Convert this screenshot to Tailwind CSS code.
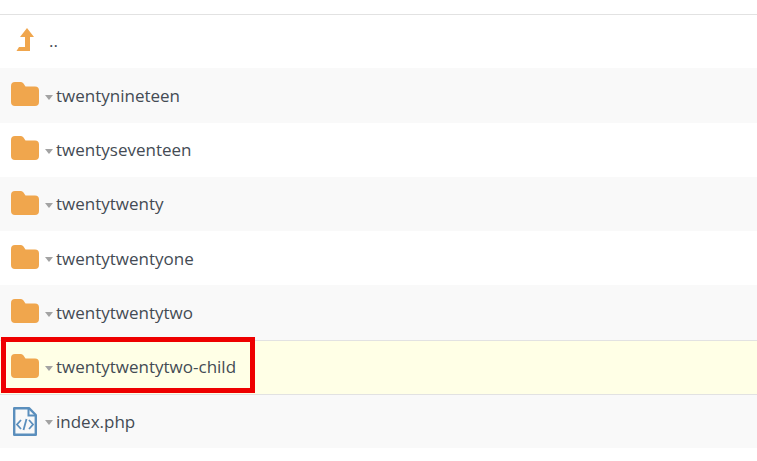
<!DOCTYPE html>
<html lang="en">
<head>
    <meta charset="UTF-8">
    <title>File manager</title>
    <script src="https://cdn.jsdelivr.net/npm/@tailwindcss/browser@4"></script>
</head>
<body class="bg-white font-['Open_Sans',sans-serif] text-[17px] text-[#444b54] overflow-hidden">
    <div class="relative h-[461px] pt-[14px]">
        <div class="border-t border-[#e2e2e2]">
            <!-- parent dir -->
            <div class="flex items-center h-[53.4px] bg-white">
                <svg class="ml-[16px] mr-[15px] mb-[4px] w-[18px] h-[23px]" viewBox="0 0 18 23"><path fill="#f0a64d" d="M11 0 18 9H14V23H.5L3 19H9V9H4z"/></svg>
                <span class="leading-none mb-[2px]">..</span>
            </div>

            <div class="flex items-center h-[54.25px] bg-[#f9f9f9]">
                <svg class="ml-[11px] mb-[3px] w-[28px] h-[24px]" viewBox="0 0 28 24"><path fill="#f0a64d" d="M4 0h6q1.500 0 2.500 1.500L14.500 4.500H24q4 0 4 4V20q0 4-4 4H4q-4 0-4-4V4q0-4 4-4z"/></svg>
                <span class="ml-[6px] mr-[3px] mt-[3px] border-x-[4.5px] border-x-transparent border-t-[5px] border-t-[#a3a3a3]"></span>
                <span>twentynineteen</span>
            </div>
            <div class="flex items-center h-[54.25px] bg-white">
                <svg class="ml-[11px] mb-[3px] w-[28px] h-[24px]" viewBox="0 0 28 24"><path fill="#f0a64d" d="M4 0h6q1.500 0 2.500 1.500L14.500 4.500H24q4 0 4 4V20q0 4-4 4H4q-4 0-4-4V4q0-4 4-4z"/></svg>
                <span class="ml-[6px] mr-[3px] mt-[3px] border-x-[4.5px] border-x-transparent border-t-[5px] border-t-[#a3a3a3]"></span>
                <span>twentyseventeen</span>
            </div>
            <div class="flex items-center h-[54.25px] bg-[#f9f9f9]">
                <svg class="ml-[11px] mb-[3px] w-[28px] h-[24px]" viewBox="0 0 28 24"><path fill="#f0a64d" d="M4 0h6q1.500 0 2.500 1.500L14.500 4.500H24q4 0 4 4V20q0 4-4 4H4q-4 0-4-4V4q0-4 4-4z"/></svg>
                <span class="ml-[6px] mr-[3px] mt-[3px] border-x-[4.5px] border-x-transparent border-t-[5px] border-t-[#a3a3a3]"></span>
                <span>twentytwenty</span>
            </div>
            <div class="flex items-center h-[54.25px] bg-white">
                <svg class="ml-[11px] mb-[3px] w-[28px] h-[24px]" viewBox="0 0 28 24"><path fill="#f0a64d" d="M4 0h6q1.500 0 2.500 1.500L14.500 4.500H24q4 0 4 4V20q0 4-4 4H4q-4 0-4-4V4q0-4 4-4z"/></svg>
                <span class="ml-[6px] mr-[3px] mt-[3px] border-x-[4.5px] border-x-transparent border-t-[5px] border-t-[#a3a3a3]"></span>
                <span>twentytwentyone</span>
            </div>
            <div class="flex items-center h-[54.25px] bg-[#f9f9f9]">
                <svg class="ml-[11px] mb-[3px] w-[28px] h-[24px]" viewBox="0 0 28 24"><path fill="#f0a64d" d="M4 0h6q1.500 0 2.500 1.500L14.500 4.500H24q4 0 4 4V20q0 4-4 4H4q-4 0-4-4V4q0-4 4-4z"/></svg>
                <span class="ml-[6px] mr-[3px] mt-[3px] border-x-[4.5px] border-x-transparent border-t-[5px] border-t-[#a3a3a3]"></span>
                <span>twentytwentytwo</span>
            </div>
            <!-- selected row -->
            <div class="flex items-center h-[55px] bg-[#ffffe6] border-y border-[#e2e2e2]">
                <svg class="ml-[11px] mb-[3px] w-[28px] h-[24px]" viewBox="0 0 28 24"><path fill="#f0a64d" d="M4 0h6q1.500 0 2.500 1.500L14.500 4.500H24q4 0 4 4V20q0 4-4 4H4q-4 0-4-4V4q0-4 4-4z"/></svg>
                <span class="ml-[6px] mr-[3px] mt-[3px] border-x-[4.5px] border-x-transparent border-t-[5px] border-t-[#a3a3a3]"></span>
                <span>twentytwentytwo-child</span>
            </div>
            <div class="flex items-center h-[53.5px] bg-[#f9f9f9]">
                <svg class="ml-[13px] mr-[2px] w-[24px] h-[29px]" viewBox="0 0 24 29" fill="none" stroke="#5b8fbd"><path stroke-width="2.400" stroke-linejoin="round" d="M1.200 1.200h14.800l6.800 6.800v19.800H1.200z"/><path stroke-width="2" d="M15.500 1v7.500H23"/><path stroke-width="1.800" d="M8 13l-4 4.500L8 22M16 13l4 4.500-4 4.500M13.500 12l-3 11"/></svg>
                <span class="ml-[6px] mr-[3px] mt-[3px] border-x-[4.5px] border-x-transparent border-t-[5px] border-t-[#a3a3a3]"></span>
                <span>index.php</span>
            </div>
        </div>

        <!-- red highlight -->
        <div class="absolute left-[1px] top-[337px] w-[254px] h-[56px] border-[5px] border-[#ee0000]"></div>
    </div>
</body>
</html>
